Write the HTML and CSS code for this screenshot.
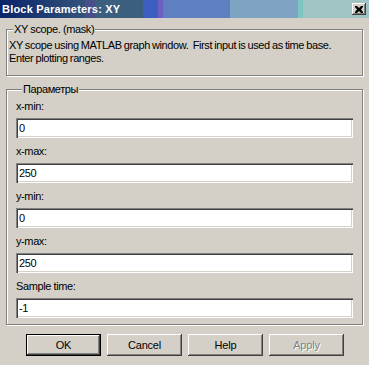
FILE: index.html
```html
<!DOCTYPE html>
<html lang="ru">
<head>
    <meta charset="UTF-8">
    <title>Block Parameters: XY</title>
    <link rel="stylesheet" href="styles.css">
</head>
<body>
    <div class="window">
        <div class="titlebar">
            <span class="title">Block Parameters: XY</span>
            <button class="close" type="button">
                <svg width="8" height="7" viewBox="0 0 8 7"><path d="M0 0h2l2 2 2-2h2v1l-2 2.5 2 2.5v1h-2l-2-2-2 2h-2v-1l2-2.5-2-2.5z" fill="#000"/></svg>
            </button>
        </div>
        <div class="content">
            <fieldset class="group mask">
                <legend>XY scope. (mask)</legend>
                <p class="desc">XY scope using MATLAB graph window.&nbsp; First input is used as time base.<br>Enter plotting ranges.</p>
            </fieldset>

            <fieldset class="group params">
                <legend>Параметры</legend>
                <label class="field">
                    <span class="field-label">x-min:</span>
                    <input type="text" value="0">
                </label>
                <label class="field">
                    <span class="field-label">x-max:</span>
                    <input type="text" value="250">
                </label>
                <label class="field">
                    <span class="field-label">y-min:</span>
                    <input type="text" value="0">
                </label>
                <label class="field">
                    <span class="field-label">y-max:</span>
                    <input type="text" value="250">
                </label>
                <label class="field">
                    <span class="field-label">Sample time:</span>
                    <input type="text" value="-1">
                </label>
            </fieldset>

            <div class="buttons">
                <button class="btn default" type="button">OK</button>
                <button class="btn" type="button">Cancel</button>
                <button class="btn" type="button">Help</button>
                <button class="btn" type="button" disabled>Apply</button>
            </div>
        </div>
    </div>
</body>
</html>
```

FILE: styles.css
```css
body {
    margin: 0;
    padding: 0;
    background-color: #d4d0c8;
    font-family: 'Liberation Sans', Arial, sans-serif;
    font-size: 11px;
    letter-spacing: -0.4px;
    color: #000;
}
.window {
    width: 369px;
    height: 365px;
    overflow: hidden;
}
.titlebar {
    height: 18px;
    display: flex;
    align-items: center;
    justify-content: space-between;
    padding: 0 2px 0 2px;
    background: linear-gradient(to right,
        #0a246a 0, #33537a 85px,
        #484e88 85px, #484e88 95px,
        #3d5f7f 95px, #3d5f7f 143px,
        #3b5ec0 143px, #3b5ec0 158px,
        #6b5fc4 158px, #6b5fc4 163px,
        #5f80c0 163px, #5f80c0 230px,
        #7fa3c3 230px, #7fa3c3 298px,
        #7ec6c2 298px, #7ec6c2 303px,
        #a0c4c4 303px);
}
.title {
    color: #fff;
    font-weight: bold;
    font-size: 11px;
    letter-spacing: 0.2px;
}
.close {
    width: 14px;
    height: 12px;
    padding: 0;
    margin-right: 1px;
    display: flex;
    align-items: center;
    justify-content: center;
    background-color: #d4d0c8;
    border: none;
    box-shadow: inset -1px -1px 0 #404040, inset 1px 1px 0 #fff, inset -2px -2px 0 #808080;
}
.content {
    padding: 5px 6px 0 6px;
}
.group {
    margin: 0;
    padding: 0;
    width: 357px;
    box-sizing: border-box;
    min-inline-size: 0;
    border: 1px solid #808080;
    box-shadow: 1px 1px 0 #fff, inset 1px 1px 0 #fff;
}
.group legend {
    margin-left: 6px;
    padding: 0 1px;
    line-height: 13px;
    background-color: #d4d0c8;
}
.mask {
    height: 53px;
}
.desc {
    margin: 3px 0 0 2px;
    line-height: 13px;
    white-space: nowrap;
    word-spacing: -0.5px;
}
.params {
    margin-top: 7px;
    height: 242px;
    padding: 4px 9px 0 9px;
    display: flex;
    flex-direction: column;
    gap: 7px;
}
.field {
    display: flex;
    flex-direction: column;
    gap: 5px;
}
.field-label {
    line-height: 13px;
}
.field input {
    height: 20px;
    box-sizing: border-box;
    margin: 0;
    padding: 0 3px;
    font-family: 'Liberation Sans', Arial, sans-serif;
    font-size: 11px;
    letter-spacing: -0.4px;
    background-color: #fff;
    border: none;
    box-shadow: inset 1px 1px 0 #808080, inset 2px 2px 0 #404040, inset -1px -1px 0 #fff, inset -2px -2px 0 #d4d0c8;
    outline: none;
}
.buttons {
    display: flex;
    gap: 6px;
    margin: 9px 0 0 20px;
}
.btn {
    width: 75px;
    height: 22px;
    padding: 0;
    font-family: 'Liberation Sans', Arial, sans-serif;
    font-size: 11px;
    letter-spacing: -0.2px;
    color: #000;
    background-color: #d4d0c8;
    border: none;
    box-shadow: inset -1px -1px 0 #404040, inset 1px 1px 0 #fff, inset -2px -2px 0 #808080;
}
.btn.default {
    box-shadow: inset 0 0 0 1px #000, inset -2px -2px 0 #404040, inset 2px 2px 0 #fff, inset -3px -3px 0 #808080;
}
.btn:disabled {
    color: #808080;
    text-shadow: 1px 1px 0 #fff;
}
```
